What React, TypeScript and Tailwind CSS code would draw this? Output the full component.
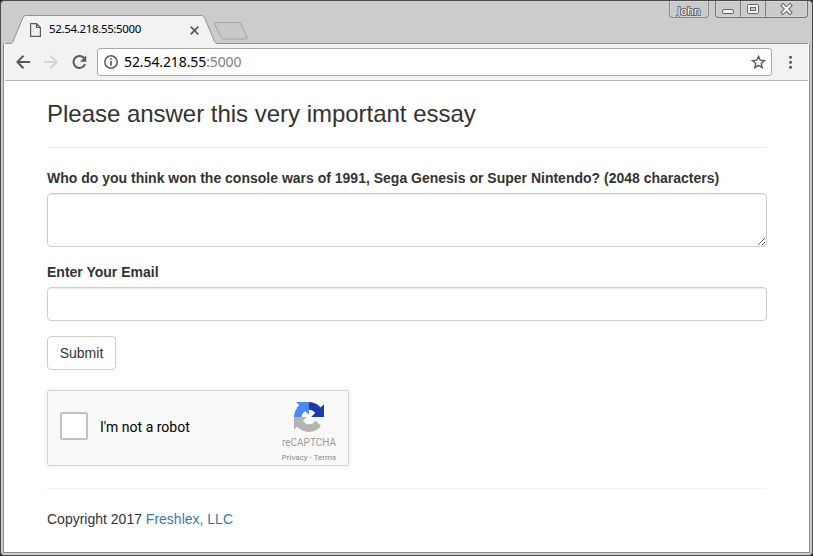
import React from "react";

const sans = "font-['Liberation_Sans',Arial,sans-serif]";
const ui = "font-['Noto_Sans',Tahoma,sans-serif]";

function TitleBar() {
  return (
    <div className="flex h-[42px] shrink-0 items-start justify-between pl-[6px] pr-[2px]">
      <div className="flex pt-[14px]">
        <div className="relative h-[28px] w-[208px]">
          <svg className="absolute left-0 top-0" width="208" height="30" fill="none">
            <path d="M0 28.5H1.5C3 28.5 3.5 27.5 4 26.5L14 2.5Q14.8.5 16.5.5H192.5Q194.5.5 195.5 2.5L205.5 26.5Q206.5 28.5 208 28.5V30H0Z" fill="#f2f2f2" />
            <path d="M0 28.5H1.5C3 28.5 3.5 27.5 4 26.5L14 2.5Q14.8.5 16.5.5H192.5Q194.5.5 195.5 2.5L205.5 26.5Q206.5 28.5 208 28.5" stroke="#929292" />
          </svg>
          <div className="relative flex h-[28px] items-center pl-[21px] pr-[18px]">
            <svg className="mt-px" width="11" height="14" viewBox="0 0 11 14" fill="none" stroke="#5a5a5a" strokeWidth="1.2">
              <path d="M.6.6H6.5L10.4 4.5V13.4H.6ZM6.5.6V4.5H10.4" />
            </svg>
            <span className={`${ui} ml-[8px] whitespace-nowrap text-[11.5px] leading-[16px] tracking-[-0.34px] text-black`}>52.54.218.55:5000</span>
            <svg className="ml-auto mt-[2px]" width="9" height="9" viewBox="0 0 9 9" stroke="#5a5a5a" strokeWidth="1.7">
              <path d="M.7.7L8.3 8.3M8.3.7L.7 8.3" />
            </svg>
          </div>
        </div>
        <svg className="-ml-[4px] mt-[7px]" width="36" height="19" fill="none">
          <path d="M3 .5H25.5Q27.3.5 28 2L34 15Q34.7 17 33 17H11Q9 17 8.2 15.3L1.5 2.5Q.7.5 3 .5Z" fill="#c8c8c8" stroke="#a0a0a0" />
        </svg>
      </div>
      <div className="flex">
        <div className="mr-[6px] flex h-[17px] w-[40px] items-center justify-center rounded-b-[4px] border border-t-0 border-[#898989] bg-[#cacaca] shadow-[inset_0_0_0_1px_#d6d6d6]">
          <svg width="30" height="15">
            <text x="3.5" y="12.5" fontFamily="DejaVu Sans, sans-serif" fontSize="11" fill="#fff" stroke="#656565" strokeWidth="2" paintOrder="stroke" textLength="23" lengthAdjust="spacingAndGlyphs">John</text>
          </svg>
        </div>
        <div className="flex h-[17px] w-[93px] rounded-b-[4px] border border-t-0 border-[#737373] bg-[#cbcbcb] shadow-[inset_0_0_0_1px_#d6d6d6]">
          <div className="w-[25px] border-r border-[#808080]">
            <svg width="24" height="16"><rect x="6.5" y="8.5" width="11" height="4" rx="1.5" fill="#f4f4f4" stroke="#666" /></svg>
          </div>
          <div className="w-[25px] border-r border-[#808080]">
            <svg width="24" height="16"><rect x="6.5" y="3.5" width="11" height="9" rx="1" fill="#f4f4f4" stroke="#666" /><rect x="9.5" y="6.5" width="5" height="3" fill="#ccc" stroke="#666" /></svg>
          </div>
          <svg width="41" height="16" fill="none">
            <path d="M17 4.5L24 11.5M24 4.5L17 11.5" stroke="#666" strokeWidth="4" strokeLinecap="square" />
            <path d="M17 4.5L24 11.5M24 4.5L17 11.5" stroke="#fff" strokeWidth="2" strokeLinecap="square" />
          </svg>
        </div>
      </div>
    </div>
  );
}

function Toolbar() {
  return (
    <div className="flex h-[38px] shrink-0 items-center border-b border-t border-b-[#b6b6b6] border-t-[#929292] bg-[#f2f2f2] pl-[11px]">
      <svg width="14" height="14" viewBox="0 0 14 14" fill="none" stroke="#5a5a5a" strokeWidth="2">
        <path d="M14 7H1.5M7.5 .8L1.3 7L7.5 13.2" />
      </svg>
      <svg className="ml-[14px]" width="14" height="14" viewBox="0 0 14 14" fill="none" stroke="#d3d3d3" strokeWidth="2">
        <path d="M0 7H12.5M6.5 .8L12.7 7L6.5 13.2" />
      </svg>
      <svg className="ml-[14px]" width="15" height="15" viewBox="0 0 15 15" fill="none">
        <path d="M12.2 3.2A6 6 0 1 0 13.1 9.2" stroke="#5a5a5a" strokeWidth="2" />
        <path d="M14.2 .5V6.7H8Z" fill="#5a5a5a" />
      </svg>
      <div className="ml-[10px] flex h-[28px] w-[675px] items-center rounded-[3px] border border-[#aaa] bg-white pl-[6px] pr-[5px]">
        <svg width="14" height="14" viewBox="0 0 14 14" fill="none" stroke="#5a5a5a">
          <circle cx="7" cy="7" r="6.2" strokeWidth="1.5" />
          <path d="M7 6V10.7M7 3.2V4.8" strokeWidth="1.7" />
        </svg>
        <span className={`${ui} ml-[6px] whitespace-nowrap text-[14px] leading-[20px] tracking-[-0.1px] text-black`}>
          52.54.218.55<span className="text-[#808080]">:5000</span>
        </span>
        <svg className="ml-auto" width="15" height="14" viewBox="0 0 15 14" fill="none" stroke="#5a5a5a" strokeWidth="1.4">
          <path d="M7.5 1.4L9.2 5.2L13.5 5.6L10.2 8.4L11.2 12.6L7.5 10.4L3.8 12.6L4.8 8.4L1.5 5.6L5.8 5.2Z" />
        </svg>
      </div>
      <svg className="ml-[17px]" width="4" height="14" fill="#5a5a5a">
        <circle cx="1.5" cy="2.2" r="1.5" /><circle cx="1.5" cy="7.2" r="1.5" /><circle cx="1.5" cy="12.2" r="1.5" />
      </svg>
    </div>
  );
}

function Recaptcha() {
  return (
    <div className="mt-[20px] flex h-[76px] w-[302px] items-center rounded-[3px] border border-[#d3d3d3] bg-[#f9f9f9] pl-[12px] font-[Roboto,sans-serif] shadow-[0_0_4px_1px_rgba(0,0,0,0.08)]">
      <div className="mt-[-4px] h-[28px] w-[28px] rounded-[2px] border-2 border-[#c1c1c1] bg-white" />
      <span className="ml-[12px] mt-[-2px] w-[160px] text-[14px] leading-[17px] text-black">I'm not a robot</span>
      <div className="ml-[17px] flex w-[64px] flex-col items-center self-start pt-[11px]">
        <svg width="30" height="30" viewBox="0 0 64 64">
          <path d="M64 31.955l-.016-1.37V4.687l-7.16 7.16C50.964 4.674 42.033.093 32.05.093c-10.4 0-19.63 4.96-25.474 12.64l11.736 11.86a15.55 15.55 0 0 1 4.754-5.334c2.05-1.6 4.952-2.906 8.968-2.906.485 0 .86.057 1.135.163 4.976.393 9.288 3.14 11.828 7.124l-8.307 8.307L64 31.953" fill="#1c3aa9" />
          <path d="M31.862.094l-1.37.016H4.594l7.16 7.16C4.58 13.147 0 22.08 0 32.046c0 10.4 4.96 19.63 12.64 25.474L24.5 45.784a15.55 15.55 0 0 1-5.334-4.754c-1.6-2.05-2.906-4.952-2.906-8.968 0-.485.057-.86.163-1.135.393-4.976 3.14-9.288 7.124-11.828l8.307 8.307L31.86.095" fill="#4a8af4" />
          <path d="M.001 32.045l.016 1.37v25.898l7.16-7.16c5.873 7.173 14.804 11.754 24.773 11.754 10.4 0 19.63-4.96 25.474-12.64l-11.736-11.86a15.55 15.55 0 0 1-4.754 5.334c-2.05 1.6-4.952 2.906-8.968 2.906-.485 0-.86-.057-1.135-.163-4.976-.393-9.288-3.14-11.828-7.124l8.307-8.307L0 32.045" fill="#b4b4b4" />
        </svg>
        <span className="mt-[6px] text-[10px] leading-[10px] text-[#9b9b9b]">reCAPTCHA</span>
        <span className="mt-[5px] whitespace-nowrap text-[8px] leading-[10px] text-[#888]">Privacy - Terms</span>
      </div>
    </div>
  );
}

export default function App() {
  const field = "block w-full rounded-[4px] border border-[#ccc] bg-white px-[12px] py-[6px] text-[14px] shadow-[inset_0_1px_1px_rgba(0,0,0,0.075)] outline-none";
  return (
    <div className="h-[556px] w-[813px] overflow-hidden bg-[#1e2428]">
      <div className="flex h-[556px] w-[813px] flex-col rounded-[4px] border border-[#4b4b4b] bg-[#ccc] px-[2px] pb-[2px]">
        <TitleBar />
        <div className="flex min-h-0 flex-1 flex-col border-x border-b border-[#8a8a8a] bg-white px-px">
          <Toolbar />
          <main className={`${sans} ml-[42px] w-[720px] text-[14px] leading-[20px] text-[#333]`}>
            <h1 className="mt-[20px] text-[24px] leading-[26px] tracking-[-0.02px]">Please answer this very important essay</h1>
            <hr className="mb-[20px] mt-[20px] border-t border-[#eee]" />
            <form onSubmit={(e) => e.preventDefault()}>
              <label htmlFor="essay" className="mb-[5px] block whitespace-nowrap font-bold">
                Who do you think won the console wars of 1991, Sega Genesis or Super Nintendo? (2048 characters)
              </label>
              <textarea id="essay" className={`${field} h-[54px]`} />
              <label htmlFor="email" className="mb-[5px] mt-[15px] block font-bold">Enter Your Email</label>
              <input id="email" className={`${field} h-[34px]`} />
              <button className="mt-[15px] block h-[34px] w-[69px] rounded-[4px] border border-[#ccc] bg-white text-[14px] leading-[20px] text-[#333]">Submit</button>
              <Recaptcha />
            </form>
            <hr className="mb-[20px] mt-[22px] border-t border-[#eee]" />
            <p>Copyright 2017 <a className="text-[#337ab7]">Freshlex, LLC</a></p>
          </main>
        </div>
      </div>
    </div>
  );
}
